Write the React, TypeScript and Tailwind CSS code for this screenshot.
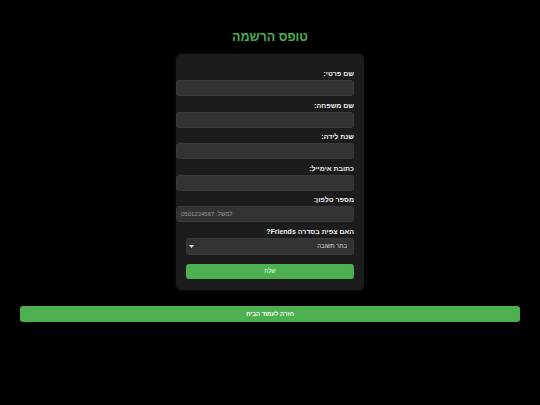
import React from 'react';

const fields = [
  { label: 'שם פרטי:', type: 'text' },
  { label: 'שם משפחה:', type: 'text' },
  { label: 'שנת לידה:', type: 'number' },
  { label: 'כתובת אימייל:', type: 'email' },
  { label: 'מספר טלפון:', type: 'tel', placeholder: 'למשל: 0501234567' },
];

export default function App() {
  return (
    <div
      dir="rtl"
      className="min-h-[405px] w-full bg-black px-[20px] pt-[29px] text-white"
      style={{ fontFamily: '"Liberation Sans", "DejaVu Sans", sans-serif' }}
    >
      <h1 className="text-center text-[12.5px] font-bold leading-[16px] text-[#4caf50]">טופס הרשמה</h1>

      <form className="mx-auto mt-[9px] w-[188px] rounded-[5px] bg-[#1c1c1c] px-[10px] pt-[16px] pb-[11px] shadow-[0_0_6px_rgba(255,255,255,0.06)]">
        {fields.map((f) => (
          <div key={f.label} className="mb-[5.6px]">
            <label className="mb-[2px] block text-right text-[7px] font-bold leading-[8px] text-[#eeeeee]">
              {f.label}
            </label>
            <input
              type={f.type}
              placeholder={f.placeholder}
              className="block h-[16px] w-[178px] rounded-[3px] border border-[#3a3a3a] bg-[#333333] px-[4px] text-left text-[6px] text-white outline-none placeholder:text-[#9a9a9a]"
            />
          </div>
        ))}

        <div className="mb-[9px]">
          <label className="mb-[2px] block text-right text-[7px] font-bold leading-[8px] text-[#eeeeee]">
            האם צפית בסדרה Friends?
          </label>
          <div className="relative">
            <select className="block h-[17px] w-full appearance-none rounded-[3px] border border-[#3a3a3a] bg-[#333333] px-[6px] text-[6px] text-[#dddddd] outline-none">
              <option>בחר תשובה</option>
              <option>כן</option>
              <option>לא</option>
            </select>
            <svg
              viewBox="0 0 10 6"
              className="pointer-events-none absolute top-[7px] left-[3px] h-[3px] w-[5px]"
            >
              <path d="M0 0 L10 0 L5 6 Z" fill="#dddddd" />
            </svg>
          </div>
        </div>

        <button
          type="button"
          className="block h-[15px] w-full rounded-[3px] bg-[#4caf50] text-[6px] leading-[15px] text-[#eaffea]"
        >
          שלח
        </button>
      </form>

      <button
        type="button"
        className="mt-[16px] block h-[16px] w-full rounded-[3px] bg-[#4caf50] text-[6px] font-bold leading-[16px] text-white"
      >
        חזרה לעמוד הבית
      </button>
    </div>
  );
}
